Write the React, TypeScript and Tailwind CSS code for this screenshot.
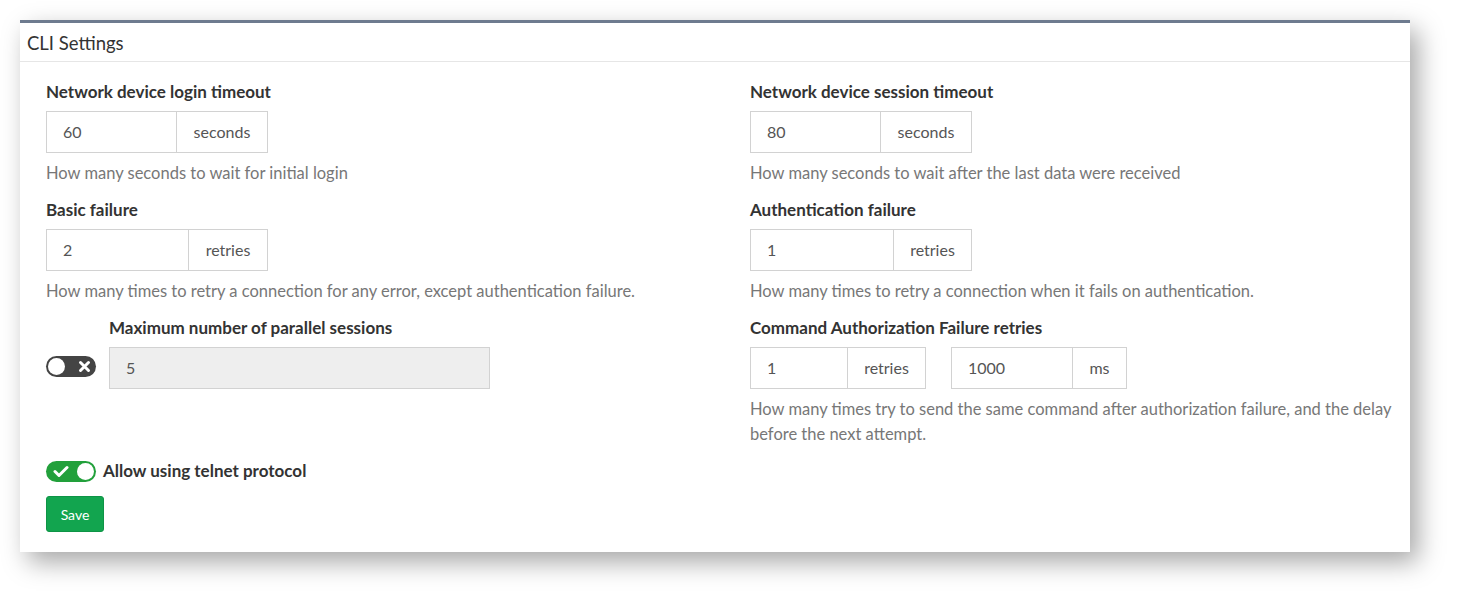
import React from "react";

const font = { fontFamily: "Lato, 'Noto Sans', sans-serif" };

function InputGroup({ value, unit, inputW, unitW }: { value: string; unit: string; inputW: string; unitW: string }) {
  return (
    <div className="flex h-[42px]">
      <div className={`${inputW} h-full border border-[#d2d2d2] flex items-center pl-4 text-[16px] text-[#555]`}>{value}</div>
      <div className={`${unitW} h-full border border-l-0 border-[#d2d2d2] flex items-center justify-center text-[16px] text-[#555]`}>{unit}</div>
    </div>
  );
}

function Label({ children }: { children: React.ReactNode }) {
  return <div className="text-[17px] leading-[24px] font-bold text-[#333]">{children}</div>;
}

function Help({ children }: { children: React.ReactNode }) {
  return <div className="text-[16.5px] leading-[25px] text-[#777]">{children}</div>;
}

function ToggleOff() {
  return (
    <div className="relative w-[50px] h-[21px] rounded-full bg-[#444] flex items-center shrink-0">
      <div className="absolute left-[2px] top-[2px] w-[17px] h-[17px] rounded-full bg-white" />
      <svg className="absolute left-[32px] top-[4px]" width="13" height="13" viewBox="0 0 13 13">
        <path d="M2.5 2.5 L10.5 10.5 M10.5 2.5 L2.5 10.5" stroke="white" strokeWidth="3" strokeLinecap="round" />
      </svg>
    </div>
  );
}

function ToggleOn() {
  return (
    <div className="relative w-[50px] h-[21px] rounded-full bg-[#22a03b] flex items-center shrink-0">
      <svg className="absolute left-[7px] top-[4px]" width="16" height="13" viewBox="0 0 16 13">
        <path d="M2 6.5 L6 10.5 L14 2.5" stroke="white" strokeWidth="3" fill="none" strokeLinecap="round" strokeLinejoin="round" />
      </svg>
      <div className="absolute right-[2px] top-[2px] w-[17px] h-[17px] rounded-full bg-white" />
    </div>
  );
}

export default function App() {
  return (
    <div className="w-[1458px] h-[600px] bg-white pt-[20px] pl-[20px]" style={font}>
      <div className="w-[1390px] bg-white border-t-[3px] border-[#6e7b8f] shadow-[8px_10px_24px_rgba(0,0,0,0.35)]">
        <div className="h-[39px] border-b border-[#e6e6e6] flex items-center pl-[7px] pt-[3px] text-[18.5px] text-[#333]">CLI Settings</div>
        <div className="pl-[26px] pr-[10px] pt-[18px] pb-[20px]">
          <div className="flex">
            <div className="w-[704px] flex flex-col">
              <Label>Network device login timeout</Label>
              <div className="mt-[7px]"><InputGroup value="60" unit="seconds" inputW="w-[131px]" unitW="w-[91px]" /></div>
              <div className="mt-[8px]"><Help>How many seconds to wait for initial login</Help></div>
              <div className="mt-[12px]"><Label>Basic failure</Label></div>
              <div className="mt-[7px]"><InputGroup value="2" unit="retries" inputW="w-[143px]" unitW="w-[79px]" /></div>
              <div className="mt-[8px]"><Help>How many times to retry a connection for any error, except authentication failure.</Help></div>
              <div className="mt-[12px] flex items-center gap-[13px]">
                <div className="mt-[28px]"><ToggleOff /></div>
                <div className="flex flex-col">
                  <Label>Maximum number of parallel sessions</Label>
                  <div className="mt-[7px] w-[381px] h-[42px] bg-[#eeeeee] border border-[#d2d2d2] flex items-center pl-4 text-[16px] text-[#555]">5</div>
                </div>
              </div>
            </div>
            <div className="flex-1 flex flex-col">
              <Label>Network device session timeout</Label>
              <div className="mt-[7px]"><InputGroup value="80" unit="seconds" inputW="w-[131px]" unitW="w-[91px]" /></div>
              <div className="mt-[8px]"><Help>How many seconds to wait after the last data were received</Help></div>
              <div className="mt-[12px]"><Label>Authentication failure</Label></div>
              <div className="mt-[7px]"><InputGroup value="1" unit="retries" inputW="w-[144px]" unitW="w-[78px]" /></div>
              <div className="mt-[8px]"><Help>How many times to retry a connection when it fails on authentication.</Help></div>
              <div className="mt-[12px]"><Label>Command Authorization Failure retries</Label></div>
              <div className="mt-[7px] flex gap-[25px]">
                <InputGroup value="1" unit="retries" inputW="w-[98px]" unitW="w-[78px]" />
                <InputGroup value="1000" unit="ms" inputW="w-[122px]" unitW="w-[54px]" />
              </div>
              <div className="mt-[8px]"><Help>How many times try to send the same command after authorization failure, and the delay<br />before the next attempt.</Help></div>
            </div>
          </div>
          <div className="mt-[12px] flex items-center gap-[7px]">
            <ToggleOn />
            <div className="text-[17px] leading-[24px] font-bold text-[#333]">Allow using telnet protocol</div>
          </div>
          <div className="mt-[13px]">
            <div className="w-[58px] h-[36px] rounded-[3px] bg-[#12a54f] border border-[#0e9446] flex items-center justify-center text-white text-[14px]">Save</div>
          </div>
        </div>
      </div>
    </div>
  );
}
